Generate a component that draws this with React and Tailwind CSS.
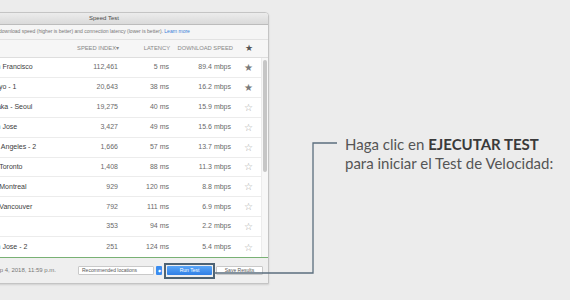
import React from "react";

const rows = [
  { name: "San Francisco", index: "112,461", latency: "5 ms", speed: "89.4 mbps", fav: true },
  { name: "Tokyo - 1", index: "20,643", latency: "38 ms", speed: "16.2 mbps", fav: true },
  { name: "Osaka - Seoul", index: "19,275", latency: "40 ms", speed: "15.9 mbps", fav: false },
  { name: "San Jose", index: "3,427", latency: "49 ms", speed: "15.6 mbps", fav: false },
  { name: "Los Angeles - 2", index: "1,666", latency: "57 ms", speed: "13.7 mbps", fav: false },
  { name: "CA Toronto", index: "1,408", latency: "88 ms", speed: "11.3 mbps", fav: false },
  { name: "CA Montreal", index: "929", latency: "120 ms", speed: "8.8 mbps", fav: false },
  { name: "CA Vancouver", index: "792", latency: "111 ms", speed: "6.9 mbps", fav: false },
  { name: "", index: "353", latency: "94 ms", speed: "2.2 mbps", fav: false },
  { name: "San Jose - 2", index: "251", latency: "124 ms", speed: "5.4 mbps", fav: false },
];

const Star = ({ filled }) => (
  <span className={filled ? "text-[10px] text-[#7a7a7a]" : "text-[10px] text-[#a8a8a8]"}>
    {filled ? "★" : "☆"}
  </span>
);

const SpeedWindow = () => {
  return (
    <div className="ml-[-61px] mt-[12px] w-[330px] h-[272px] flex flex-col border border-[#c4c4c4] rounded-t-[4px] bg-white shadow-[0_1px_2px_rgba(0,0,0,0.12)] overflow-hidden shrink-0">
      {/* title bar */}
      <div className="h-[12px] flex items-center justify-center bg-gradient-to-b from-[#ececec] to-[#dadada] border-b border-[#bcbcbc] text-[6px] text-[#4a4a4a]">
        Speed Test
      </div>

      {/* description */}
      <div className="h-[15px] flex items-center pl-[37px] bg-[#f5f5f5] border-b border-[#e2e2e2] text-[5px] text-[#777]">
        Compare download speed (higher is better) and connection latency (lower is better).&nbsp;
        <span className="text-[#3a7fd8]">Learn more</span>
      </div>

      {/* header */}
      <div className="h-[18px] flex items-center bg-[#f6f6f6] border-b border-[#dedede] text-[5.8px] text-[#888] uppercase">
        <div className="w-[118px]" />
        <div className="w-[61px] text-right">Speed Index▾</div>
        <div className="w-[51px] text-right">Latency</div>
        <div className="w-[63px] text-right">Download Speed</div>
        <div className="w-[31px] flex justify-center text-[9px] text-[#555]">★</div>
      </div>

      {/* body */}
      <div className="flex flex-1 min-h-0">
        <div className="w-[321px] flex flex-col">
          {rows.map((r, i) => (
            <div
              key={i}
              className={
                "h-[20px] flex items-center text-[7px] text-[#555] " +
                (i < rows.length - 1 ? "border-b border-[#ececec]" : "")
              }
            >
              <div className="w-[118px] pl-[48px] text-[#3d3d3d] whitespace-nowrap">{r.name}</div>
              <div className="w-[60px] text-right text-[#6a6a6a]">{r.index}</div>
              <div className="w-[51px] text-right text-[#6a6a6a]">{r.latency}</div>
              <div className="w-[62px] text-right text-[#6a6a6a]">{r.speed}</div>
              <div className="w-[30px] flex justify-center pl-[4px]">
                <Star filled={r.fav} />
              </div>
            </div>
          ))}
        </div>
        <div className="w-[7px] bg-[#f7f7f7] border-l border-[#ececec] pt-[2px] flex justify-center">
          <div className="w-[4px] h-[112px] rounded-full bg-[#c6c6c6]" />
        </div>
      </div>

      {/* footer */}
      <div className="h-[26px] flex items-center border-t border-[#79b174] bg-[#efefef] text-[5.5px]">
        <div className="w-[116px] text-right text-[6px] text-[#777] whitespace-nowrap">Sep 4, 2018, 11:59 p.m.</div>
        <div className="ml-[22px] w-[84px] h-[9px] flex items-center">
          <div className="flex-1 h-full flex items-center pl-[3px] bg-white border border-[#c9c9c9] rounded-[1px] text-[5px] text-[#555]">
            Recommended locations
          </div>
          <div className="ml-[2px] w-[6px] h-full rounded-[1px] bg-[#3b8cf0] flex items-center justify-center text-[4px] text-white leading-none">
            ◆
          </div>
        </div>
        <div className="ml-[2px] w-[51px] h-[16px] border-2 border-[#4d6273] p-[1px] flex items-center">
          <div className="w-full h-[9px] rounded-[1px] bg-gradient-to-b from-[#5aa6f7] to-[#2f7fe6] flex items-center justify-center text-[5px] text-white">
            Run Test
          </div>
        </div>
        <div className="ml-[1px] w-[47px] h-[9px] bg-white border border-[#c9c9c9] rounded-[1px] flex items-center justify-center text-[5px] text-[#555]">
          Save Results
        </div>
      </div>
    </div>
  );
};

export default function App() {
  return (
    <div
      className="relative w-[570px] h-[300px] overflow-hidden bg-[#ececec] flex"
      style={{ fontFamily: '"Liberation Sans", Arial, sans-serif' }}
    >
      <SpeedWindow />

      <div
        className="ml-[76px] mt-[135px] text-[15px] leading-[19px] text-[#555] whitespace-nowrap"
        style={{ fontFamily: "Lato, sans-serif" }}
      >
        <div>
          Haga clic en <span className="font-bold text-[#3a3a3a]">EJECUTAR TEST</span>
        </div>
        <div>para iniciar el Test de Velocidad:</div>
      </div>

      {/* connector line */}
      <svg className="absolute left-0 top-0 pointer-events-none" width="570" height="300">
        <polyline
          points="214,273 313,273 313,143 337,143"
          fill="none"
          stroke="#5b6e7d"
          strokeWidth="1.3"
        />
      </svg>
    </div>
  );
}
